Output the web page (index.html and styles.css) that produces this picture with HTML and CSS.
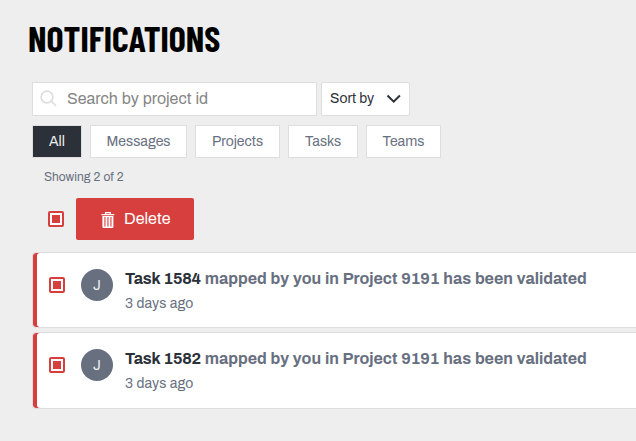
FILE: index.html
```html
<!DOCTYPE html>
<html lang="en">
<head>
<meta charset="utf-8">
<title>Notifications</title>
<link rel="stylesheet" href="styles.css">
</head>
<body>
<main class="page">
  <h1 class="title">NOTIFICATIONS</h1>
  <div class="search-row">
    <label class="search">
      <svg class="search-icon" width="18" height="18" viewBox="0 0 18 18"><circle cx="7" cy="7" r="5.9"/><path d="M11.2 11.2L16 16"/></svg>
      <span class="placeholder">Search by project id</span>
    </label>
    <button class="sort"><span class="sort-text">Sort by</span>
      <svg class="chevron" width="16" height="10" viewBox="0 0 16 10"><path d="M1.5 1.5L7.7 7.7L13.9 1.5"/></svg>
    </button>
  </div>
  <nav class="tabs">
    <button class="tab tab-all active"><span>All</span></button>
    <button class="tab tab-messages"><span>Messages</span></button>
    <button class="tab tab-projects"><span>Projects</span></button>
    <button class="tab tab-tasks"><span>Tasks</span></button>
    <button class="tab tab-teams"><span>Teams</span></button>
  </nav>
  <p class="count"><span>Showing 2 of 2</span></p>
  <div class="actions">
    <span class="check" role="checkbox" aria-checked="true"></span>
    <button class="delete">
      <svg class="trash" width="14" height="16" viewBox="0 0 14 16"><path class="lid" d="M.5 2.7H13.3M4.6 2.7V.7H9.2V2.7"/><path fill-rule="evenodd" d="M1.4 4H12.4V14.8Q12.4 16 11.2 16H2.6Q1.4 16 1.4 14.8ZM3.4 5V14.4H4.5V5ZM6.4 5V14.4H7.5V5ZM9.4 5V14.4H10.5V5Z"/></svg>
      <span class="delete-text">Delete</span>
    </button>
  </div>
  <section class="list">
    <article class="card">
      <span class="check" role="checkbox" aria-checked="true"></span>
      <span class="avatar">J</span>
      <div class="body">
        <p class="message"><strong>Task 1584</strong> mapped by you in Project 9191 has been validated</p>
        <p class="date">3 days ago</p>
      </div>
    </article>
    <article class="card">
      <span class="check" role="checkbox" aria-checked="true"></span>
      <span class="avatar">J</span>
      <div class="body">
        <p class="message"><strong>Task 1582</strong> mapped by you in Project 9191 has been validated</p>
        <p class="date">3 days ago</p>
      </div>
    </article>
  </section>
</main>
</body>
</html>
```
FILE: styles.css
```css
* { box-sizing: border-box; }
body {
  margin: 0;
  background: #eee;
  color: #68707f;
  font-family: Archivo, "Liberation Sans", Arial, sans-serif;
  word-spacing: .6px;
  overflow: hidden;
}
h1, p { margin: 0; }
button { font: inherit; color: inherit; padding: 0; cursor: pointer; }
.page { padding: 17px 0 0 32px; }
.title {
  height: 65px;
  margin-left: -4px;
  font: 700 36px/42px "Barlow Condensed", Roboto, sans-serif;
  color: #000;
}
.search-row { display: flex; gap: 4px; height: 34px; }
.search {
  display: flex;
  align-items: center;
  width: 285px;
  padding-left: 7px;
  background: #fff;
  border: 1px solid #dedede;
}
.search-icon { fill: none; stroke: #dedede; stroke-width: 1.7; margin-bottom: 1px; }
.placeholder { margin: 0 0 2px 9px; font-size: 16px; color: #858585; }
.sort {
  display: flex;
  align-items: center;
  width: 89px;
  padding-left: 8px;
  background: #fff;
  border: 1px solid #dedede;
  border-radius: 2px;
  color: #2c3038;
  font-size: 14px;
}
.sort-text { width: 56px; margin-bottom: 2px; text-align: left; }
.chevron { fill: none; stroke: #2c3038; stroke-width: 2; }
.tabs { display: flex; gap: 8px; height: 33px; margin-top: 9px; }
.tab { background: #fff; border: 1px solid #dedede; font-size: 14px; }
.tab-all { width: 50px; }
.tab-messages { width: 97px; }
.tab-projects { width: 85px; }
.tab-tasks { width: 70px; }
.tab-teams { width: 75px; }
.tab.active { background: #2c3038; color: #eee; }
.count { margin: 11px 0 0 12px; font-size: 12px; line-height: 16px; }
.actions {
  display: flex;
  align-items: center;
  gap: 12px;
  height: 42px;
  margin: 13px 0 0 16px;
}
.check {
  flex: none;
  width: 16px;
  height: 16px;
  border: 2px solid #d73f3f;
  border-radius: 2px;
  background: #fff;
  padding: 2px;
}
.check::before { content: ""; display: block; height: 8px; background: #d73f3f; }
.delete {
  display: flex;
  align-items: center;
  width: 118px;
  height: 42px;
  padding-left: 25px;
  border: 0;
  border-radius: 2px;
  background: #d73f3f;
  color: #fff;
  font-size: 16px;
}
.trash { fill: #fff; margin-top: 1px; }
.lid { fill: none; stroke: #fff; stroke-width: 1.3; }
.delete-text { margin: 0 0 2px 9px; }
.list { display: grid; gap: 4px; margin-top: 12px; }
.card {
  display: flex;
  height: 76px;
  padding: 16px 0 0 12px;
  background: #fff;
  border: 1px solid #dedede;
  border-right: 0;
  border-radius: 4px 0 0 4px;
  box-shadow: inset 4px 0 #d73f3f;
}
.card:last-child { height: 77px; }
.card .check { margin: 8px 16px 0 4px; }
.avatar {
  width: 32px;
  height: 32px;
  border-radius: 50%;
  background: #68707f;
  color: #eee;
  font-size: 14px;
  line-height: 33px;
  text-align: center;
}
.body { margin-left: 12px; white-space: nowrap; }
.message { font-size: 16px; line-height: 20px; font-weight: 700; word-spacing: .7px; }
.message strong { color: #2c3038; font-weight: 700; letter-spacing: -.22px; }
.date { margin-top: 6px; font-size: 14px; line-height: 18px; }
```
